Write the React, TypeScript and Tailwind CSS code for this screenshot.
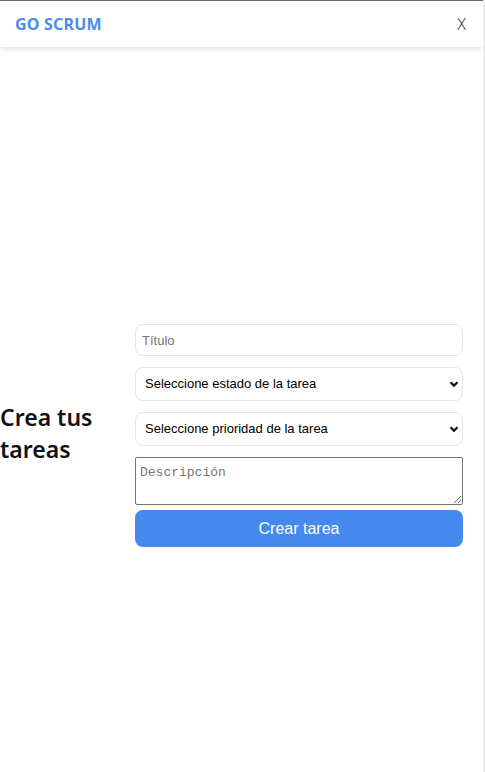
import React, { useState } from 'react';

const Chevron: React.FC = () => (
  <svg
    className="pointer-events-none absolute right-[4px] top-1/2 -translate-y-1/2"
    width="10"
    height="8"
    viewBox="0 0 10 8"
  >
    <path d="M1.5 2.2 L5 5.6 L8.5 2.2" fill="none" stroke="#111" strokeWidth="2.2" />
  </svg>
);

const App: React.FC = () => {
  const [form, setForm] = useState({ title: '', status: '', importance: '', description: '' });

  return (
    <div className="min-h-[772px] flex bg-white font-['Liberation_Sans',Arial,sans-serif]">
      <div className="flex-1 flex flex-col border-t border-[#5f6b73]">
        <header className="h-[46px] flex items-center justify-between pl-[15px] pr-[17px] bg-white shadow-[0_2px_6px_rgba(0,0,0,0.12)]">
          <span className="text-[16px] font-bold text-[#4a8cf0] font-['Noto_Sans',sans-serif] tracking-[0.2px]">
            GO SCRUM
          </span>
          <span className="text-[16px] font-light text-[#333] font-['Noto_Sans',sans-serif]">X</span>
        </header>

        <main className="flex items-center pt-[277px] pr-[20px]">
          <h2 className="w-[135px] shrink-0 pb-[6px] text-[23px] leading-[32px] font-semibold text-[#111] font-['Noto_Sans',sans-serif]">
            Crea tus tareas
          </h2>

          <form className="flex-1 flex flex-col" onSubmit={e => e.preventDefault()}>
            <input
              type="text"
              placeholder="Título"
              value={form.title}
              onChange={e => setForm({ ...form, title: e.target.value })}
              className="h-[32px] px-[6px] rounded-[8px] border border-[#e6e6e6] text-[13px] placeholder:text-[#757575] outline-none"
            />

            <div className="relative mt-[11px]">
              <select
                value={form.status}
                onChange={e => setForm({ ...form, status: e.target.value })}
                className="w-full h-[34px] pl-[9px] pr-[20px] appearance-none rounded-[8px] border border-[#e6e6e6] bg-white text-[13px] text-black outline-none"
              >
                <option value="">Seleccione estado de la tarea</option>
                <option value="NEW">Nueva</option>
                <option value="IN PROGRESS">En proceso</option>
                <option value="FINISHED">Terminada</option>
              </select>
              <Chevron />
            </div>

            <div className="relative mt-[11px]">
              <select
                value={form.importance}
                onChange={e => setForm({ ...form, importance: e.target.value })}
                className="w-full h-[34px] pl-[9px] pr-[20px] appearance-none rounded-[8px] border border-[#e6e6e6] bg-white text-[13px] text-black outline-none"
              >
                <option value="">Seleccione prioridad de la tarea</option>
                <option value="LOW">Baja</option>
                <option value="MEDIUM">Media</option>
                <option value="HIGH">Alta</option>
              </select>
              <Chevron />
            </div>

            <textarea
              placeholder="Descripción"
              value={form.description}
              onChange={e => setForm({ ...form, description: e.target.value })}
              className="mt-[11px] h-[48px] px-[4px] py-[7px] rounded-[2px] border border-[#767676] text-[13px] leading-[16px] font-['Liberation_Mono',monospace] placeholder:text-[#757575] outline-none resize-y block"
            />

            <button
              type="submit"
              className="mt-[5px] h-[37px] rounded-[8px] bg-[#4589ec] text-white text-[16px]"
            >
              Crear tarea
            </button>
          </form>
        </main>
      </div>
      <div className="w-[2px] shrink-0 bg-[#ececec]" />
    </div>
  );
};

export default App;
